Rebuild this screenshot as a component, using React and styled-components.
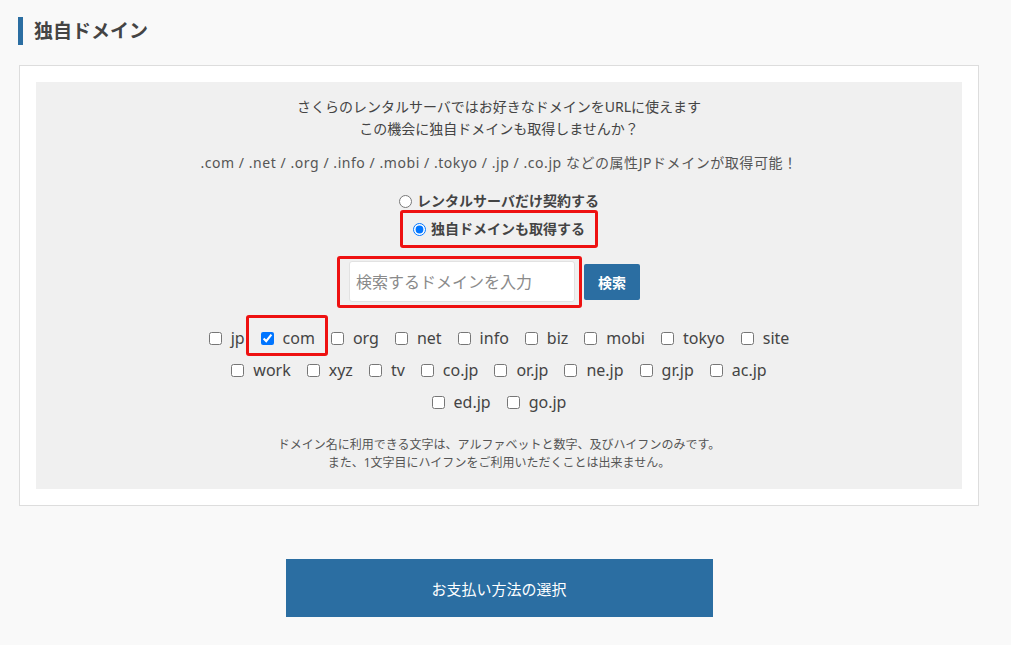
import styled, { createGlobalStyle } from 'styled-components';

const GlobalStyle = createGlobalStyle`
  html, body {
    margin: 0;
    padding: 0;
    background: #f9f9f9;
    font-family: "Noto Sans", "Noto Sans CJK JP", sans-serif;
    color: #444;
  }
`;

const Page = styled.div`
  width: 960px;
  padding: 17px 0 0 19px;
`;

const Heading = styled.h2`
  margin: 0 0 20px -1px;
  padding-left: 11px;
  border-left: 5px solid #2b6ea2;
  font-size: 19px;
  font-weight: bold;
  line-height: 28px;
  color: #444;
`;

const Card = styled.section`
  background: #fff;
  border: 1px solid #dddddd;
  padding: 16px;
`;

const Inner = styled.div`
  background: #f0f0f0;
  padding: 14px 0 17px;
  display: flex;
  flex-direction: column;
  align-items: center;
  text-align: center;
`;

const Lead = styled.p`
  margin: 0;
  font-size: 14px;
  line-height: 22px;
  color: ${({ $muted }) => ($muted ? '#555' : '#444')};
  margin-top: ${({ $gap }) => $gap || 0}px;
  letter-spacing: ${({ $spaced }) => ($spaced ? '0.55px' : 'normal')};
`;

const RadioGroup = styled.div`
  margin-top: 16px;
  display: flex;
  flex-direction: column;
  align-items: center;
`;

const RadioLabel = styled.label`
  display: flex;
  align-items: center;
  gap: 5px;
  font-size: 14px;
  font-weight: bold;
  line-height: 22px;
  color: #444;
  padding: ${({ $marked }) => ($marked ? '5px 10px 5px 10px' : '0')};
  border: ${({ $marked }) => ($marked ? '3px solid #ee1111' : 'none')};
  border-radius: 3px;
  margin-top: ${({ $marked }) => ($marked ? '-2px' : '0')};

  input {
    margin: 0;
    width: 13px;
    height: 13px;
  }
`;

const SearchRow = styled.div`
  margin-top: 8px;
  display: flex;
  align-items: center;
  gap: 2px;
  margin-right: 21px;
`;

const Marked = styled.div`
  border: 3px solid #ee1111;
  border-radius: 3px;
  padding: 2px 4px 3px 9px;
`;

const SearchInput = styled.input`
  box-sizing: border-box;
  width: 226px;
  height: 41px;
  border: 1px solid #e2e2e2;
  border-radius: 3px;
  background: #fff;
  padding: 0 6px;
  font-family: inherit;
  font-size: 16px;
  color: #444;
  display: block;

  &::placeholder {
    color: #8a8a8a;
  }
`;

const SearchButton = styled.button`
  width: 56px;
  height: 36px;
  border: none;
  border-radius: 2px;
  background: #2b6ea2;
  color: #fff;
  font-family: inherit;
  font-size: 14px;
  font-weight: bold;
  padding: 0;
`;

const TldList = styled.div`
  margin-top: 14px;
  display: flex;
  flex-direction: column;
  align-items: center;
`;

const TldRow = styled.div`
  display: flex;
  justify-content: center;
  height: 32px;
`;

const TldItem = styled.label`
  position: relative;
  display: flex;
  align-items: center;
  gap: 9px;
  margin: 0 8px;
  font-size: 16px;
  color: #444;

  input {
    margin: 0;
    width: 13px;
    height: 13px;
  }

  ${({ $marked }) =>
    $marked &&
    `
    &::after {
      content: '';
      position: absolute;
      left: -15px;
      right: -13px;
      top: -7px;
      bottom: -2px;
      border: 3px solid #ee1111;
      border-radius: 3px;
      pointer-events: none;
    }
  `}
`;

const Note = styled.p`
  margin: 18px 0 0;
  font-size: 12px;
  line-height: 18px;
  color: #555;
`;

const Footer = styled.div`
  display: flex;
  justify-content: center;
  margin-top: 53px;
`;

const PayButton = styled.button`
  width: 427px;
  height: 58px;
  border: none;
  background: #2b6ea2;
  color: #fff;
  font-family: inherit;
  font-size: 15px;
`;

const rows = [
  ['jp', 'com', 'org', 'net', 'info', 'biz', 'mobi', 'tokyo', 'site'],
  ['work', 'xyz', 'tv', 'co.jp', 'or.jp', 'ne.jp', 'gr.jp', 'ac.jp'],
  ['ed.jp', 'go.jp'],
];

export default function App() {
  return (
    <>
      <GlobalStyle />
      <Page>
        <Heading>独自ドメイン</Heading>
        <Card>
          <Inner>
            <Lead>
              さくらのレンタルサーバではお好きなドメインをURLに使えます
              <br />
              この機会に独自ドメインも取得しませんか？
            </Lead>
            <Lead $gap={12} $muted $spaced>
              .com / .net / .org / .info / .mobi / .tokyo / .jp / .co.jp などの属性JPドメインが取得可能！
            </Lead>
            <RadioGroup>
              <RadioLabel>
                <input type="radio" name="plan" />
                レンタルサーバだけ契約する
              </RadioLabel>
              <RadioLabel $marked>
                <input type="radio" name="plan" defaultChecked />
                独自ドメインも取得する
              </RadioLabel>
            </RadioGroup>
            <SearchRow>
              <Marked>
                <SearchInput placeholder="検索するドメインを入力" />
              </Marked>
              <SearchButton>検索</SearchButton>
            </SearchRow>
            <TldList>
              {rows.map((row, i) => (
                <TldRow key={i}>
                  {row.map((tld) => (
                    <TldItem key={tld} $marked={tld === 'com'}>
                      <input type="checkbox" defaultChecked={tld === 'com'} />
                      {tld}
                    </TldItem>
                  ))}
                </TldRow>
              ))}
            </TldList>
            <Note>
              ドメイン名に利用できる文字は、アルファベットと数字、及びハイフンのみです。
              <br />
              また、1文字目にハイフンをご利用いただくことは出来ません。
            </Note>
          </Inner>
        </Card>
        <Footer>
          <PayButton>お支払い方法の選択</PayButton>
        </Footer>
      </Page>
    </>
  );
}
